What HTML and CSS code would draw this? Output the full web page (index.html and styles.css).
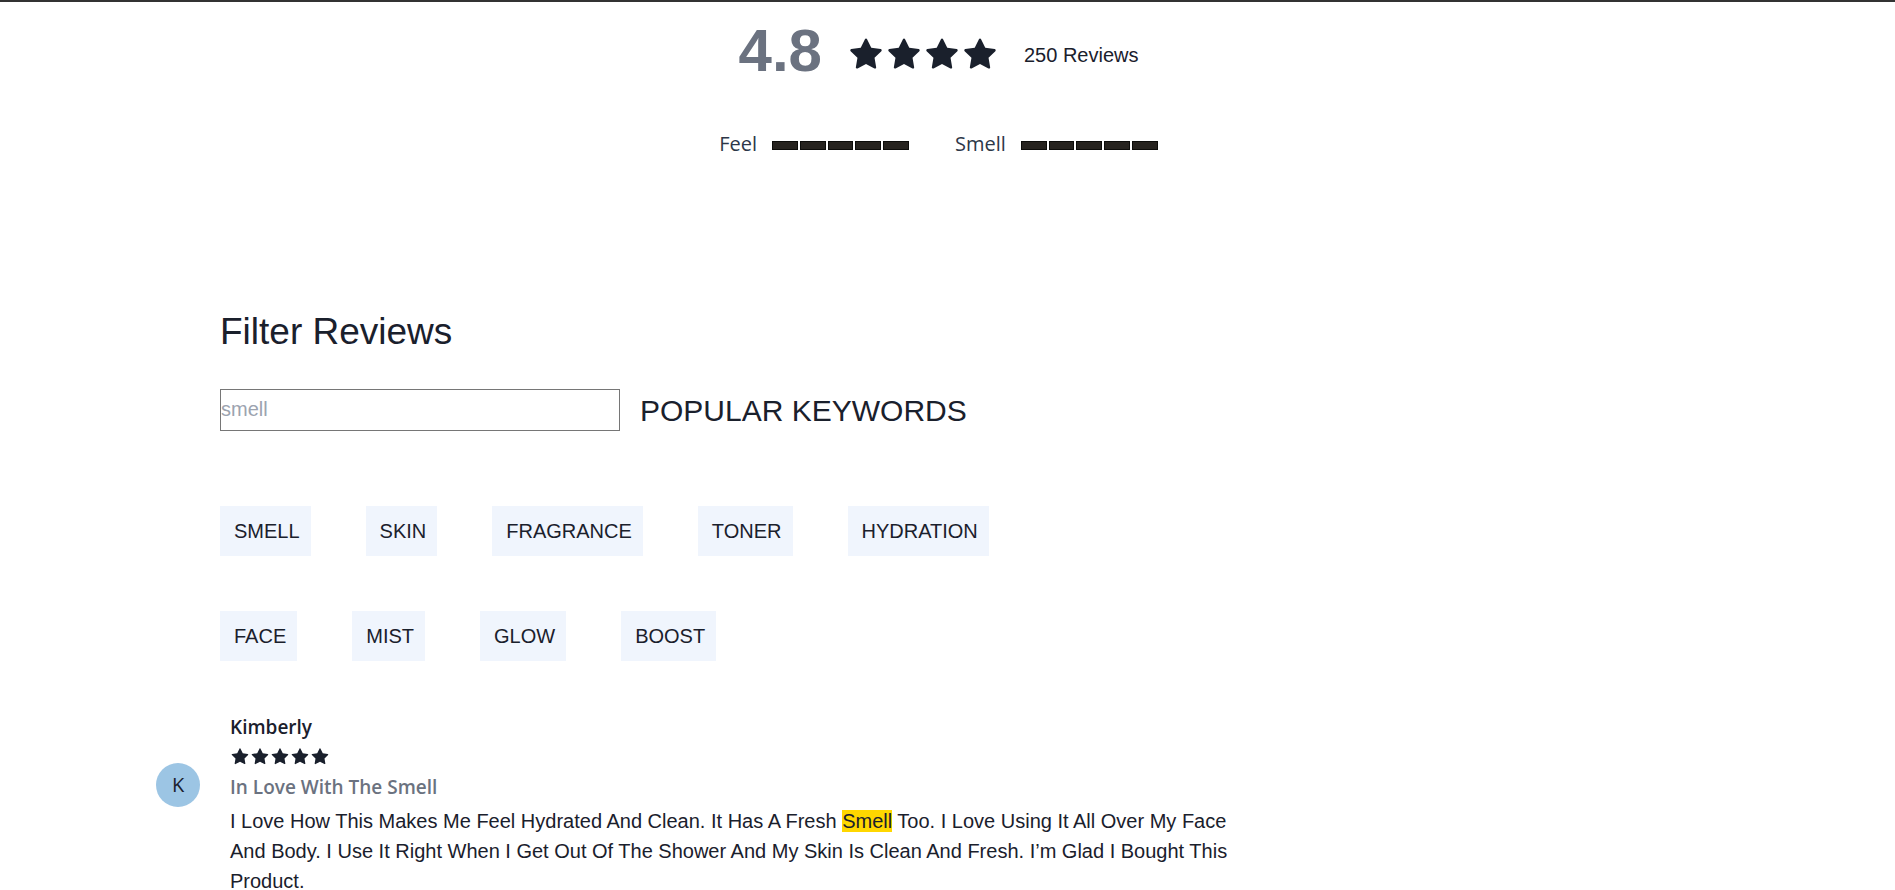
FILE: index.html
```html
<!DOCTYPE html>
<html lang="en">
<head>
<meta charset="utf-8">
<title>Reviews</title>
<link rel="stylesheet" href="styles.css">
</head>
<body>
<svg class="sprite" aria-hidden="true"><symbol id="star" viewBox="0 0 1024 1024"><path d="M908.1 353.1l-253.9-36.9L540.7 86.1c-3.1-6.3-8.2-11.4-14.5-14.5-15.8-7.8-35-1.3-42.9 14.5L369.8 316.2l-253.9 36.9c-7 1-13.4 4.3-18.3 9.3a32.05 32.05 0 0 0 .6 45.3l183.7 179.1-43.4 252.9a31.95 31.95 0 0 0 46.4 33.7L512 754l227.1 119.4c6.2 3.3 13.4 4.4 20.3 3.2 17.4-3 29.1-19.5 26.1-36.9l-43.4-252.9 183.7-179.1c5-4.9 8.3-11.3 9.3-18.3 2.7-17.5-9.5-33.7-27-36.3z"/></symbol></svg>
<header class="summary">
  <div class="score-row">
    <strong class="score">4.8</strong>
    <div class="score-detail">
      <div class="stars stars-large" role="img" aria-label="Rating 4.8">
        <svg><use href="#star"/></svg><svg><use href="#star"/></svg><svg><use href="#star"/></svg><svg><use href="#star"/></svg>
      </div>
      <span class="count">250 Reviews</span>
    </div>
  </div>
  <div class="traits">
    <div class="trait"><span>Feel</span><div class="meter"><i></i><i></i><i></i><i></i><i></i></div></div>
    <div class="trait"><span>Smell</span><div class="meter"><i></i><i></i><i></i><i></i><i></i></div></div>
  </div>
</header>
<main class="content">
  <section class="filters">
    <h1>Filter Reviews</h1>
    <div class="search-row">
      <input class="search" type="text" placeholder="smell" aria-label="Filter reviews">
      <h2>POPULAR KEYWORDS</h2>
    </div>
    <div class="keywords">
      <div class="keyword-row">
        <button>SMELL</button><button>SKIN</button><button>FRAGRANCE</button><button>TONER</button><button>HYDRATION</button>
      </div>
      <div class="keyword-row">
        <button>FACE</button><button>MIST</button><button>GLOW</button><button>BOOST</button>
      </div>
    </div>
  </section>
  <article class="review">
    <div class="avatar">K</div>
    <div class="review-body">
      <h3 class="author">Kimberly</h3>
      <div class="stars stars-small" role="img" aria-label="5 stars">
        <svg><use href="#star"/></svg><svg><use href="#star"/></svg><svg><use href="#star"/></svg><svg><use href="#star"/></svg><svg><use href="#star"/></svg>
      </div>
      <h4 class="headline">In Love With The Smell</h4>
      <p>I Love How This Makes Me Feel Hydrated And Clean. It Has A Fresh <mark>Smell</mark> Too. I Love Using It All Over My Face And Body. I Use It Right When I Get Out Of The Shower And My Skin Is Clean And Fresh. I’m Glad I Bought This Product.</p>
    </div>
  </article>
</main>
</body>
</html>
```
FILE: styles.css
```css
* { box-sizing: border-box; }
body {
  margin: 0;
  border-top: 2px solid #333;
  background: #fff;
  color: #1a202c;
  font: 20px/30px "Liberation Sans", Arial, sans-serif;
}
h1, h2, h3, h4, p { margin: 0; font-weight: 400; }
.sprite { display: none; }
.stars { display: flex; fill: #1a202c; }
.summary { padding: 4px 18px 0 0; }
.score-row { display: flex; justify-content: center; align-items: center; gap: 25px; height: 90px; }
.score { color: #6b7280; font-size: 60px; line-height: 90px; }
.score-detail { display: flex; align-items: center; gap: 25px; padding-top: 7px; }
.stars-large svg { width: 38px; height: 38px; }
.stars-small svg { width: 20px; height: 20px; }
.traits { display: flex; justify-content: center; gap: 46px; padding-top: 33px; }
.trait { display: flex; align-items: center; gap: 15px; color: #2d3748; font-family: "Open Sans", sans-serif; }
.meter { display: flex; gap: 2px; width: 137px; padding-top: 3px; }
.meter i { flex: 1; height: 9px; border: 1px solid #0c0c0a; background: #26231f; }
.content { width: 66%; padding-left: 156px; }
.filters { padding: 143px 0 0 64px; }
h1 { font-size: 37px; line-height: 60px; }
.search-row { display: flex; gap: 20px; align-items: center; padding-top: 27px; }
.search { width: 400px; height: 42px; padding: 0 0 2px; border: 1px solid #767676; color: #1a202c; font: inherit; }
.search::placeholder { color: #9ca3af; }
h2 { padding-top: 2px; font-size: 30px; line-height: 40px; }
.keywords { display: grid; gap: 55px; padding-top: 75px; }
.keyword-row { display: flex; flex-wrap: wrap; gap: 55px; }
.keyword-row button { height: 50px; padding: 0 11px 0 14px; border: 0; background: #f0f5fd; color: inherit; font: inherit; }
.review { display: flex; gap: 30px; padding-top: 50px; }
.avatar { flex: none; display: grid; place-items: center; width: 44px; height: 44px; margin-top: 52px; border-radius: 50%; background: #9cc5e4; font-family: "Open Sans", sans-serif; }
.author, .headline { font-family: "Open Sans", sans-serif; font-size: 19px; font-weight: 600; line-height: 32px; }
.stars-small { padding: 4px 0; }
.headline { padding-bottom: 3px; color: #6b7280; }
mark { background: #ffd700; color: inherit; }
```
